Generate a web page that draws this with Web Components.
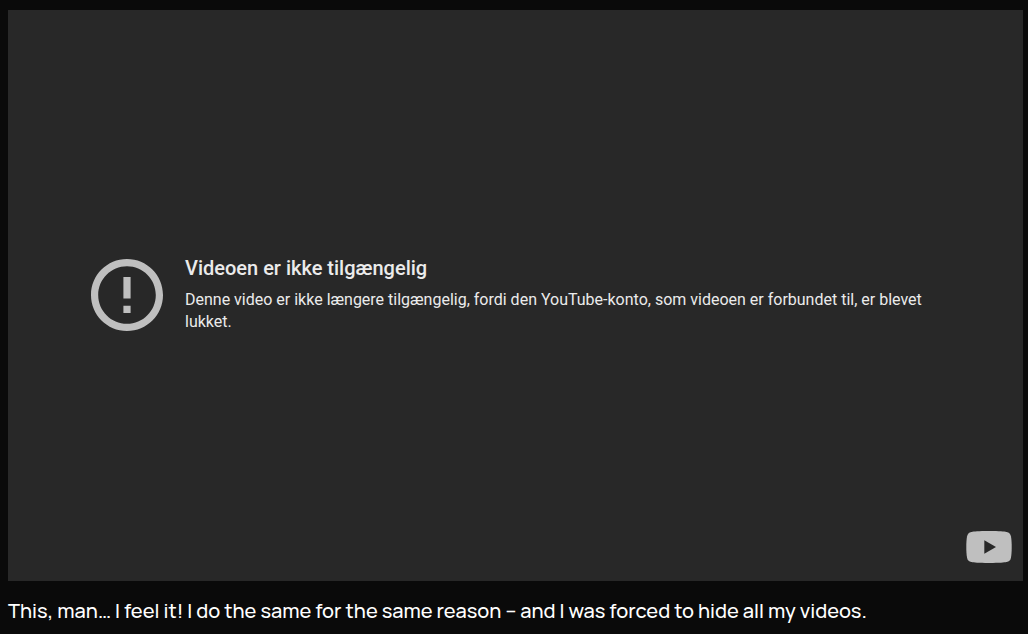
<!DOCTYPE html>
<html lang="da">
<head>
<meta charset="utf-8">
<meta name="viewport" content="width=device-width, initial-scale=1">
<title>Videoen er ikke tilgængelig</title>
<style>
  body { margin: 0; background: #0a0a0a; }
</style>
</head>
<body>
<video-post>
  <video-unavailable slot="media">
    <span slot="title">Videoen er ikke tilgængelig</span>
    <span slot="reason">Denne video er ikke længere tilgængelig, fordi den YouTube-konto, som videoen er forbundet til, er blevet lukket.</span>
  </video-unavailable>
  <span>This, man… I feel it! I do the same for the same reason – and I was forced to hide all my videos.</span>
</video-post>

<template id="post-template">
  <style>
    :host { display: block; padding: 10px 5px 8px 8px; }
    p {
      margin: 16px 0 0;
      color: #fff;
      font: 500 20px/28px Manrope, Inter, sans-serif;
    }
  </style>
  <article>
    <slot name="media"></slot>
    <p><slot></slot></p>
  </article>
</template>

<template id="unavailable-template">
  <style>
    :host {
      display: grid;
      aspect-ratio: 16 / 9;
      background: #282828;
      color: #ebebeb;
      font-family: Roboto, sans-serif;
    }
    .message, .brand { grid-area: 1 / 1; }
    .message {
      align-self: center;
      display: flex;
      align-items: center;
      gap: 22px;
      padding: 0 83px;
    }
    .icon { flex: none; width: 72px; height: 72px; }
    h1 { margin: 0 0 10px; font-size: 20px; line-height: 22px; font-weight: 500; }
    p { margin: 0; font-size: 16px; line-height: 22px; }
    .brand {
      place-self: end;
      display: block;
      margin: 0 11px 18px 0;
      line-height: 0;
    }
    .brand svg { width: 46px; height: 32px; }
  </style>
  <div class="message" role="alert">
    <svg class="icon" viewBox="2 2 20 20" fill="#bfbfbf" aria-hidden="true">
      <path d="M11 15h2v2h-2v-2zm0-8h2v6h-2V7zm.99-5C6.47 2 2 6.48 2 12s4.47 10 9.99 10C17.52 22 22 17.52 22 12S17.52 2 11.99 2zM12 20c-4.42 0-8-3.58-8-8s3.58-8 8-8 8 3.58 8 8-3.58 8-8 8z"/>
    </svg>
    <div>
      <h1><slot name="title"></slot></h1>
      <p><slot name="reason"></slot></p>
    </div>
  </div>
  <a class="brand" href="#youtube" aria-label="YouTube">
    <svg viewBox="0 0 46 32" aria-hidden="true">
      <path fill="#bfbfbf" d="M23 0C34 0 38 .4 40.500 .9C43.300 1.500 44.500 3 45 5.500C45.500 8.500 45.700 12 45.700 16S45.500 23.500 45 26.500C44.500 29 43.300 30.500 40.500 31.100C38 31.600 34 32 23 32S8 31.600 5.500 31.100C2.700 30.500 1.500 29 1 26.500C.5 23.500 .3 20 .3 16S.5 8.500 1 5.500C1.500 3 2.700 1.500 5.500 .9C8 .4 12 0 23 0Z"/>
      <path fill="#282828" d="M18.300 9.300L30 16L18.300 22.700Z"/>
    </svg>
  </a>
</template>

<script>
  const define = (name, templateId) => {
    customElements.define(name, class extends HTMLElement {
      constructor() {
        super();
        const template = document.getElementById(templateId);
        this.attachShadow({ mode: 'open' }).append(template.content.cloneNode(true));
      }
    });
  };
  define('video-unavailable', 'unavailable-template');
  define('video-post', 'post-template');
</script>
</body>
</html>
